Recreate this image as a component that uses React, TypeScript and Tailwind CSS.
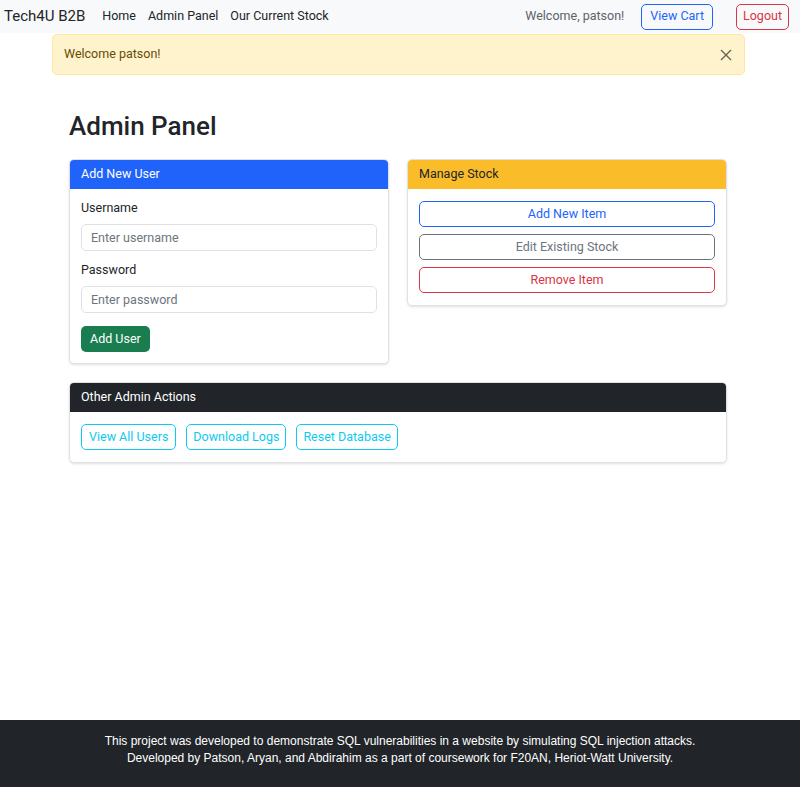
export default function App() {
  return (
    <div className="min-h-[787px] flex flex-col bg-white text-[12.5px] text-[#212529] font-['Roboto','Liberation_Sans',sans-serif]">
      {/* navbar */}
      <nav className="h-[33px] bg-[#f8f9fa] flex items-center pl-[4px] pr-[11px]">
        <span className="text-[15px] mr-[17px]">Tech4U B2B</span>
        <div className="flex gap-[12px]">
          <a className="text-[#212529]">Home</a>
          <a className="text-[#212529]">Admin Panel</a>
          <a className="text-[#212529]">Our Current Stock</a>
        </div>
        <div className="ml-auto flex items-center">
          <span className="text-[#5c636a] mr-[17px]">Welcome, patson!</span>
          <button className="h-[26px] px-[8px] border border-[#2264fb] text-[#2264fb] rounded-[5px] mr-[23px]">
            View Cart
          </button>
          <button className="h-[26px] px-[6px] border border-[#dc3545] text-[#dc3545] rounded-[5px]">
            Logout
          </button>
        </div>
      </nav>

      <div className="w-[693px] ml-[52px] mt-px flex-1">
        {/* alert */}
        <div className="h-[41px] bg-[#fff3cd] border border-[#ffe69c] rounded-[5px] flex items-center pl-[11px] pr-[12px] text-[#664d03]">
          <span>Welcome patson!</span>
          <svg className="ml-auto" width="12" height="12" viewBox="0 0 12 12" fill="none" stroke="#6b6350" strokeWidth="1.4">
            <path d="M1 1l10 10M11 1L1 11" />
          </svg>
        </div>

        <div className="pl-[17px] pr-[18px] pt-[34px]">
          <h1 className="text-[26px] leading-[34px] font-medium mb-[16px]">Admin Panel</h1>

          <div className="grid grid-cols-2 gap-[18px]">
            {/* Add new user */}
            <div className="border border-[#dee2e6] rounded-[5px] shadow-sm overflow-hidden self-start">
              <div className="h-[29px] bg-[#1f63fb] text-white flex items-center px-[11px]">Add New User</div>
              <div className="px-[11px] pt-[10px] pb-[11px]">
                <label className="block leading-[17px] mb-[8px]">Username</label>
                <input
                  placeholder="Enter username"
                  className="w-full h-[27px] border border-[#dee2e6] rounded-[5px] px-[9px] placeholder:text-[#6c757d] mb-[10px]"
                />
                <label className="block leading-[17px] mb-[8px]">Password</label>
                <input
                  placeholder="Enter password"
                  type="password"
                  className="w-full h-[27px] border border-[#dee2e6] rounded-[5px] px-[9px] placeholder:text-[#6c757d] mb-[13px]"
                />
                <button className="h-[26px] px-[9px] bg-[#1a7d4f] text-white rounded-[5px]">Add User</button>
              </div>
            </div>

            {/* Manage stock */}
            <div className="border border-[#dee2e6] rounded-[5px] shadow-sm overflow-hidden self-start">
              <div className="h-[29px] bg-[#fbbc29] text-[#212529] flex items-center px-[11px]">Manage Stock</div>
              <div className="px-[11px] pt-[12px] pb-[12px] flex flex-col gap-[7px]">
                <button className="h-[26px] border border-[#2264fb] text-[#2264fb] rounded-[5px]">Add New Item</button>
                <button className="h-[26px] border border-[#6c757d] text-[#6c757d] rounded-[5px]">Edit Existing Stock</button>
                <button className="h-[26px] border border-[#dc3545] text-[#dc3545] rounded-[5px]">Remove Item</button>
              </div>
            </div>
          </div>

          {/* Other actions */}
          <div className="mt-[18px] border border-[#dee2e6] rounded-[5px] shadow-sm overflow-hidden">
            <div className="h-[29px] bg-[#212529] text-white flex items-center px-[11px]">Other Admin Actions</div>
            <div className="px-[11px] py-[12px] flex gap-[10px]">
              <button className="h-[26px] px-[7px] border border-[#0dcaf0] text-[#0dcaf0] rounded-[5px]">View All Users</button>
              <button className="h-[26px] px-[6px] border border-[#0dcaf0] text-[#0dcaf0] rounded-[5px]">Download Logs</button>
              <button className="h-[26px] px-[6px] border border-[#0dcaf0] text-[#0dcaf0] rounded-[5px]">Reset Database</button>
            </div>
          </div>
        </div>
      </div>

      {/* footer */}
      <footer className="h-[67px] bg-[#212529] text-white text-center text-[12px] leading-[17px] pt-[13px] font-['Liberation_Sans',sans-serif]">
        <p>This project was developed to demonstrate SQL vulnerabilities in a website by simulating SQL injection attacks.</p>
        <p>Developed by Patson, Aryan, and Abdirahim as a part of coursework for F20AN, Heriot-Watt University.</p>
      </footer>
    </div>
  );
}
